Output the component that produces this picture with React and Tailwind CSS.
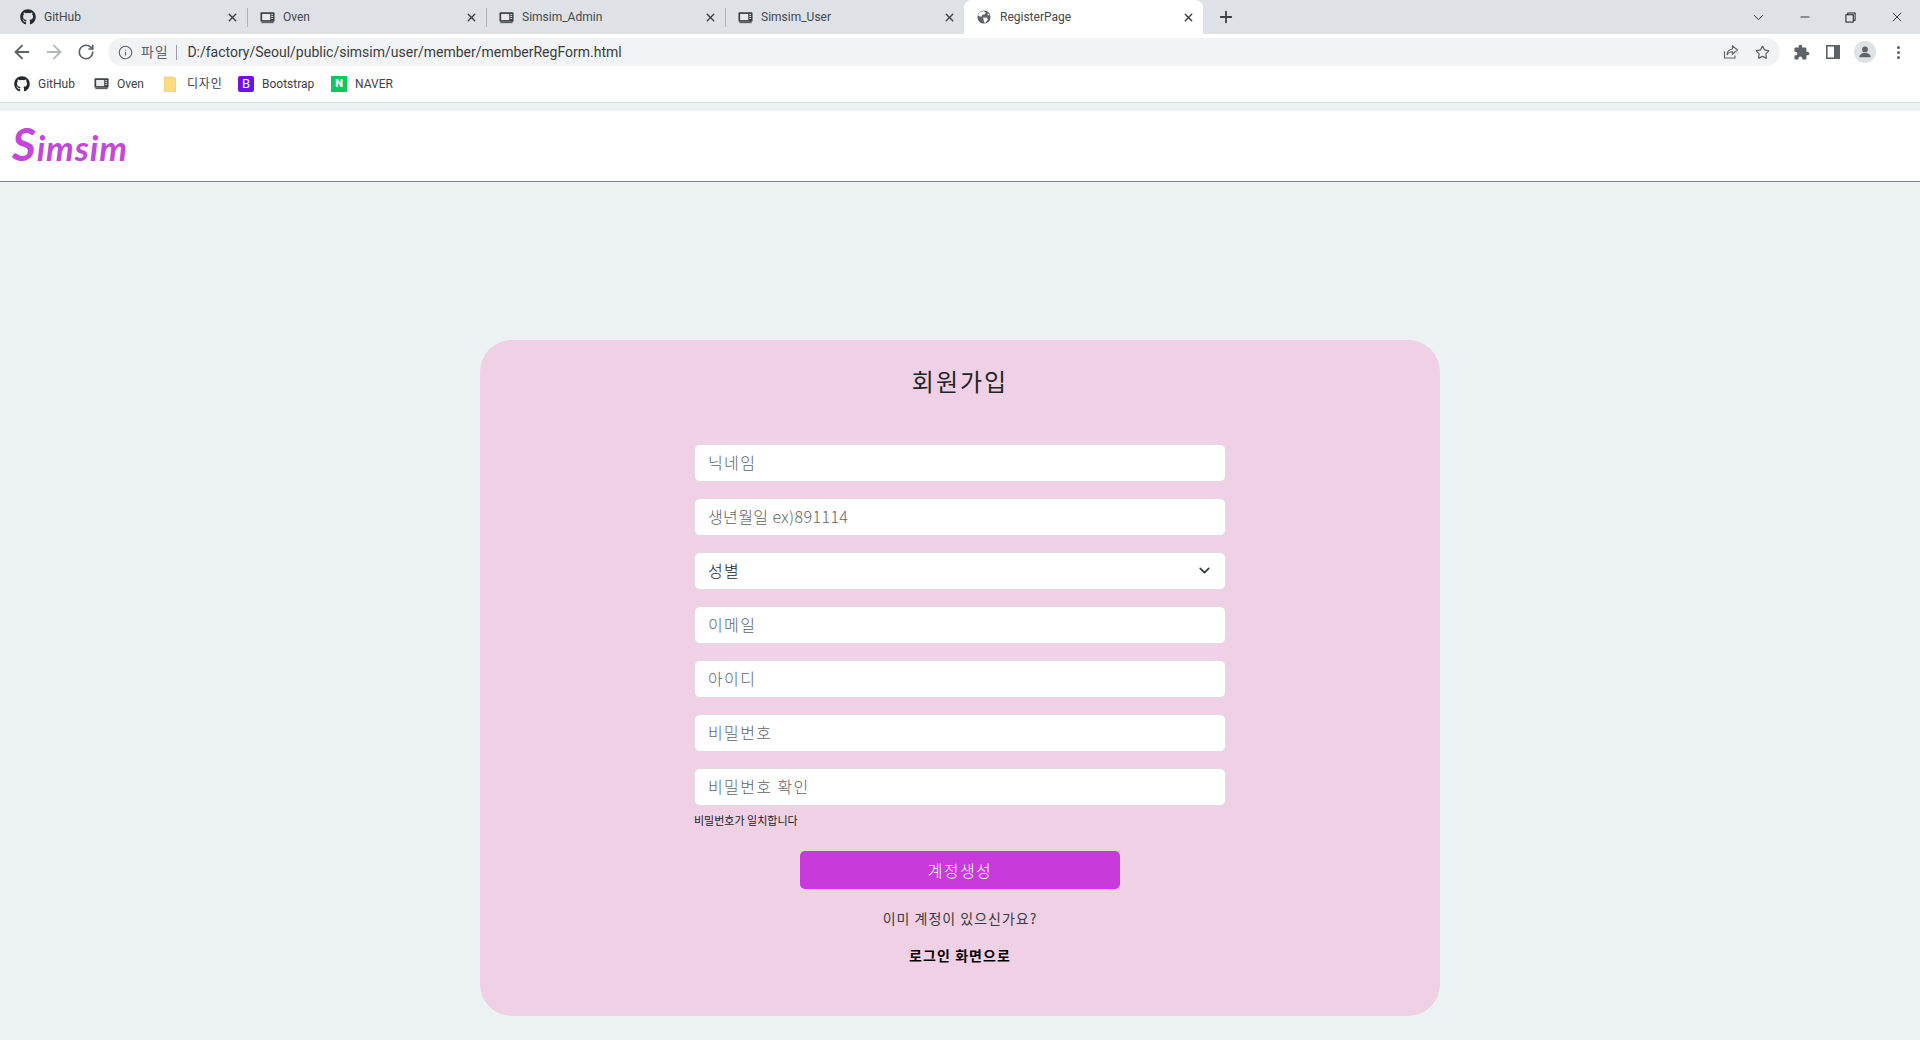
import React from "react";
import { FaGithub } from "react-icons/fa";
import { ArrowLeft, ArrowRight, RotateCw, Info, Star, ChevronDown, X, Plus, Minus } from "lucide-react";

const ui = "font-['Roboto','Noto_Sans_CJK_KR',sans-serif]";
const kr = "font-['Noto_Sans_CJK_KR','Noto_Sans',sans-serif]";

function Oven({ className = "" }) {
  return (
    <svg viewBox="0 0 16 16" className={className} fill="none">
      <rect x="0.5" y="2.5" width="15" height="10" rx="1" fill="#3c4043" />
      <rect x="2.3" y="4.2" width="8.6" height="6.6" fill="#e8eaed" />
      <rect x="12" y="4.5" width="2" height="1" fill="#e8eaed" />
      <rect x="12" y="6.5" width="2" height="1" fill="#e8eaed" />
      <rect x="12" y="8.5" width="2" height="1" fill="#e8eaed" />
      <rect x="1.5" y="13" width="13" height="1" fill="#3c4043" />
    </svg>
  );
}

function Globe() {
  return (
    <svg viewBox="0 0 16 16" className="w-[14px] h-[14px]">
      <circle cx="8" cy="8" r="7.5" fill="#5f6368" />
      <path d="M3 2.5 L7.5 1 L10 3 L8.5 5 L6 5.5 L5.5 7.5 L3 7.5 L1 6 Z" fill="#fff" />
      <path d="M7 8.5 L11 8.5 L12.5 10.5 L10 14.5 L8.5 14.5 L7.5 11.5 Z" fill="#fff" />
      <path d="M12 3 L14.5 6 L12.5 6 Z" fill="#fff" />
    </svg>
  );
}

function Tab({ icon, title, active, sep }) {
  return (
    <div className={`relative flex items-center h-[34px] w-[239px] shrink-0 pl-[12px] pr-[6px] ${active ? "bg-white rounded-t-[8px]" : ""}`}>
      <span className="w-[16px] h-[16px] flex items-center justify-center shrink-0">{icon}</span>
      <span className={`${ui} ml-[8px] text-[12px] text-[#45484c] flex-1`}>{title}</span>
      <X size={13} strokeWidth={2.6} className="text-[#3c4043] mr-[2px]" />
      {sep && <span className="absolute right-[-1px] top-[8px] w-px h-[19px] bg-[#aeb1b6]" />}
    </div>
  );
}

function Bookmark({ icon, label, w, labelClass = "" }) {
  return (
    <div className={`flex items-center ${w}`}>
      {icon}
      <span className={`${ui} text-[12px] text-[#3f4246] ml-[8px] ${labelClass}`}>{label}</span>
    </div>
  );
}

function Field({ placeholder, tracking = "tracking-[1.4px]" }) {
  return (
    <input
      placeholder={placeholder}
      className={`${kr} ${tracking} font-light w-full h-[38px] bg-white rounded-[6px] border border-[#e2dce2] pl-[13px] pr-[12px] pb-[2px] text-[16px] text-[#212529] placeholder:text-[#5f646a] outline-none`}
    />
  );
}

export default function App() {
  return (
    <div className="w-[1920px] h-[1040px] overflow-hidden bg-[#ecf1f4] flex flex-col">
      {/* tab strip */}
      <div className="h-[34px] bg-[#dee1e6] flex items-center pl-[8px] shrink-0">
        <Tab icon={<FaGithub size={16} color="#24292f" />} title="GitHub" sep />
        <Tab icon={<Oven className="w-[15px] h-[15px]" />} title="Oven" sep />
        <Tab icon={<Oven className="w-[15px] h-[15px]" />} title="Simsim_Admin" sep />
        <Tab icon={<Oven className="w-[15px] h-[15px]" />} title="Simsim_User" />
        <Tab icon={<Globe />} title="RegisterPage" active />
        <Plus size={18} strokeWidth={2.4} className="ml-[14px] text-[#3c4043]" />
        <div className="flex-1" />
        <div className="flex items-center text-[#202124] pr-[15px]">
          <ChevronDown size={17} strokeWidth={1.3} />
          <Minus size={14} strokeWidth={1.5} className="ml-[31px]" />
          <svg viewBox="0 0 12 12" className="w-[11px] h-[11px] ml-[33px]" fill="none" stroke="currentColor" strokeWidth="1.1">
            <rect x="1" y="3" width="8" height="8" />
            <path d="M3 3V1h8v8H9" />
          </svg>
          <X size={16} strokeWidth={1.2} className="ml-[33px]" />
        </div>
      </div>
      {/* toolbar */}
      <div className="h-[32px] bg-white flex items-end shrink-0 pl-[11px] pr-[16px]">
        <div className="h-[28px] flex items-center w-full">
          <ArrowLeft size={22} strokeWidth={2} className="text-[#5f6368] shrink-0" />
          <ArrowRight size={22} strokeWidth={2} className="text-[#b4b7bb] ml-[10px] shrink-0" />
          <RotateCw size={18} strokeWidth={2.2} className="text-[#5f6368] ml-[12px] shrink-0" />
          <div className="ml-[13px] h-[28px] w-[1672px] shrink-0 bg-[#f1f3f4] rounded-full flex items-center pl-[10px] pr-[10px]">
            <Info size={15} strokeWidth={1.8} className="text-[#5f6368]" />
            <span className={`${ui} text-[14px] tracking-[0.8px] text-[#5f6368] ml-[8px]`}>파일</span>
            <span className="w-px h-[15px] bg-[#9aa0a6] ml-[8px]" />
            <span className={`${ui} text-[14px] text-[#3a3d40] ml-[10px]`}>D:/factory/Seoul/public/simsim/user/member/memberRegForm.html</span>
            <div className="flex-1" />
            <svg viewBox="0 0 16 16" className="w-[16px] h-[16px] text-[#5f6368]" fill="none" stroke="currentColor" strokeWidth="1.1">
              <path d="M1.5 7.5V14h10.5v-2.5" />
              <path d="M9.5 2l5 4-5 4V7.7C7 7.7 5 8.8 4 11c0-3.3 2-5.6 5.500-6z" />
            </svg>
            <Star size={15} strokeWidth={2} className="text-[#5f6368] ml-[16px]" />
          </div>
          <svg viewBox="0 0 24 24" className="w-[17px] h-[17px] ml-[13px] shrink-0" fill="#5f6368">
            <path d="M20.5 11H19V7c0-1.100-.9-2-2-2h-4V3.500C13 2.120 11.880 1 10.500 1S8 2.120 8 3.500V5H4c-1.100 0-1.990.9-1.990 2v3.800H3.500c1.490 0 2.700 1.210 2.700 2.700s-1.210 2.700-2.700 2.700H2V20c0 1.100.9 2 2 2h3.800v-1.500c0-1.490 1.210-2.700 2.700-2.700 1.490 0 2.700 1.210 2.700 2.700V22H17c1.100 0 2-.9 2-2v-4h1.500c1.380 0 2.500-1.120 2.500-2.500S21.880 11 20.500 11z" />
          </svg>
          <svg viewBox="0 0 14 14" className="w-[14px] h-[14px] ml-[16px] shrink-0">
            <rect x="0.8" y="0.8" width="12.400" height="12.400" fill="#fff" stroke="#5f6368" strokeWidth="1.6" />
            <rect x="8" y="1" width="5" height="12" fill="#5f6368" />
          </svg>
          <div className="ml-[14px] w-[22px] h-[22px] shrink-0 rounded-full bg-[#dee1e6] flex items-center justify-center">
            <svg viewBox="0 0 16 16" className="w-[14px] h-[14px]" fill="#5f6368">
              <circle cx="8" cy="5" r="3.300" />
              <path d="M1.500 14c0-3.200 3-4.800 6.500-4.800s6.500 1.600 6.500 4.800z" />
            </svg>
          </div>
          <div className="ml-[21px] flex flex-col gap-[2px] shrink-0">
            <span className="w-[3px] h-[3px] rounded-full bg-[#5f6368]" />
            <span className="w-[3px] h-[3px] rounded-full bg-[#5f6368]" />
            <span className="w-[3px] h-[3px] rounded-full bg-[#5f6368]" />
          </div>
        </div>
      </div>
      {/* bookmarks */}
      <div className="h-[37px] bg-white border-b border-[#d3dadb] flex items-center pl-[14px] shrink-0 pb-[1px]">
        <Bookmark icon={<FaGithub size={16} color="#24292f" />} label="GitHub" w="w-[80px]" />
        <Bookmark icon={<Oven className="w-[15px] h-[15px]" />} label="Oven" w="w-[70px]" />
        <Bookmark icon={
          <svg viewBox="0 0 12 16" className="w-[12px] h-[16px]">
            <path d="M0.500 1h8l3 1v13.500h-11z" fill="#fbdb7f" stroke="#ecc85f" strokeWidth="0.7" />
          </svg>
        } label="디자인" w="w-[74px]" labelClass="ml-[11px] tracking-[0.8px]" />
        <Bookmark icon={
          <span className="w-[16px] h-[16px] rounded-[2px] bg-[#6f10e8] text-white text-[13px] leading-none flex items-center justify-center font-['Roboto',sans-serif]">B</span>
        } label="Bootstrap" w="w-[93px]" />
        <Bookmark icon={
          <span className="w-[16px] h-[16px] bg-[#0bc85f] text-white text-[11px] font-black leading-none flex items-center justify-center font-['Roboto',sans-serif]">N</span>
        } label="NAVER" w="w-[80px]" />
      </div>
      {/* site header */}
      <div className="mt-[8px] h-[71px] bg-white border-b border-[#808080] flex items-center pl-[12px] pb-[4px] shrink-0">
        <span className="font-['Lato',sans-serif] italic font-bold text-[#c447da] text-[35px] leading-none tracking-[0.9px]">
          <span className="text-[46px]">S</span>imsim
        </span>
      </div>
      {/* card */}
      <div className="mt-[158px] mx-auto w-[960px] h-[676px] bg-[#efd0e4] rounded-[32px] flex flex-col items-center shrink-0">
        <h1 className={`${kr} mt-[23px] h-[36px] leading-[36px] text-[24px] tracking-[2px] text-[#212529]`}>회원가입</h1>
        <div className="mt-[45px] w-[532px] flex flex-col gap-[16px]">
          <Field placeholder="닉네임" />
          <Field placeholder="생년월일 ex)891114" tracking="tracking-[0.4px]" />
          <div className="relative">
            <select className={`${kr} tracking-[1.4px] font-light w-full h-[38px] bg-white rounded-[6px] border border-[#e2dce2] pl-[13px] pb-[2px] text-[16px] text-[#212529] appearance-none outline-none`}>
              <option>성별</option>
            </select>
            <ChevronDown size={17} strokeWidth={2.4} className="absolute right-[13px] top-[10px] text-[#343a40] pointer-events-none" />
          </div>
          <Field placeholder="이메일" />
          <Field placeholder="아이디" />
          <Field placeholder="비밀번호" />
          <Field placeholder="비밀번호 확인" />
        </div>
        <p className={`${kr} self-start ml-[214px] mt-[6px] h-[16px] leading-[16px] text-[11px] text-[#212529]`}>비밀번호가 일치합니다</p>
        <button className={`${kr} mt-[23px] w-[320px] h-[38px] rounded-[5px] bg-[#c83adc] text-white text-[16px] tracking-[1.4px] font-light`}>계정생성</button>
        <p className={`${kr} mt-[19px] h-[21px] leading-[21px] text-[14px] tracking-[1px] text-[#3a3a40]`}>이미 계정이 있으신가요?</p>
        <p className={`${kr} mt-[16px] h-[21px] leading-[21px] text-[14px] tracking-[1.1px] font-bold text-black`}>로그인 화면으로</p>
      </div>
    </div>
  );
}
